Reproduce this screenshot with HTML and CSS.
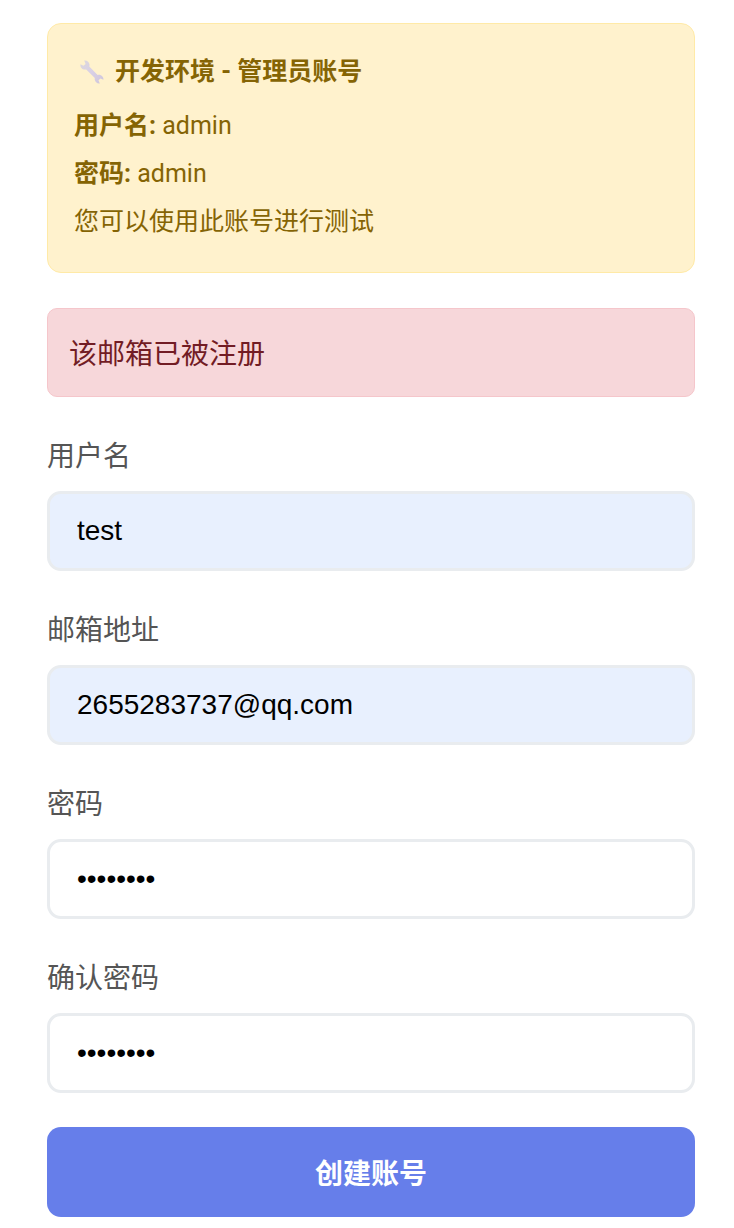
FILE: index.html
```html
<!DOCTYPE html>
<html lang="zh-CN">
<head>
<meta charset="utf-8">
<meta name="viewport" content="width=device-width, initial-scale=1">
<title>创建账号</title>
<link rel="stylesheet" href="styles.css">
</head>
<body>
<main class="page">
  <section class="notice">
    <h2 class="notice-title">
      <svg class="notice-icon" viewBox="0 0 24 24" aria-hidden="true">
        <defs>
          <linearGradient id="steel" x1="0" y1="0" x2="1" y2="1">
            <stop offset="0" stop-color="#dcd8dc"/>
            <stop offset="0.5" stop-color="#d9d0e6"/>
            <stop offset="1" stop-color="#cfc6da"/>
          </linearGradient>
        </defs>
        <path fill="url(#steel)" d="M4.200 .5C6.800 0 9.300 1.900 9.500 4.500c0 .8 0 1.300-.2 1.900l8.300 8.500c1.800-.5 3.700.1 4.800 1.500.8 1 1.200 2.200 1 3.300l-2.900-1.300-2 1.900 1.300 3.200c-2.400.4-4.900-1.300-5.100-3.900 0-.7 0-1.200.1-1.700L6.200 9.500C4.300 9.900 2.200 9.200 1.200 7.700.5 6.700.2 5.500.5 4.200l3 1.600 2.100-1.900z"/>
      </svg>
      <span>开发环境 - 管理员账号</span>
    </h2>
    <p class="notice-line"><strong>用户名:</strong> admin</p>
    <p class="notice-line"><strong>密码:</strong> admin</p>
    <p class="notice-line">您可以使用此账号进行测试</p>
  </section>

  <div class="alert" role="alert">该邮箱已被注册</div>

  <form class="form">
    <div class="field">
      <label class="label" for="username">用户名</label>
      <input class="input input-filled" id="username" type="text" value="test">
    </div>
    <div class="field">
      <label class="label" for="email">邮箱地址</label>
      <input class="input input-filled" id="email" type="email" value="2655283737@qq.com">
    </div>
    <div class="field">
      <label class="label" for="password">密码</label>
      <input class="input" id="password" type="password" value="password">
    </div>
    <div class="field">
      <label class="label" for="confirm">确认密码</label>
      <input class="input" id="confirm" type="password" value="password">
    </div>
    <button class="submit" type="button">创建账号</button>
  </form>
</main>
</body>
</html>
```
FILE: styles.css
```css
* {
  box-sizing: border-box;
}

body {
  margin: 0;
  background: #fff;
  font-family: Roboto, "Noto Sans CJK SC", sans-serif;
}

.page {
  padding: 23px 39px 11px 47px;
}

.notice {
  display: flex;
  flex-direction: column;
  gap: 8px;
  padding: 28px 26px 30px;
  border: 1px solid #ffeaa7;
  border-radius: 14px;
  background: #fff2cd;
  color: #856404;
  font-size: 25px;
  line-height: 40px;
}

.notice-title {
  display: flex;
  align-items: center;
  gap: 11px;
  margin: 0 0 6px;
  padding-left: 6px;
  font-size: 25px;
  font-weight: 700;
}

.notice-icon {
  width: 24px;
  height: 24px;
}

.notice-line {
  margin: 0;
}

.alert {
  margin-top: 35px;
  padding: 25px 21px 20px;
  border: 1px solid #f5c6cb;
  border-radius: 10px;
  background: #f7d7da;
  color: #721c24;
  font-size: 28px;
  line-height: 42px;
}

.form {
  display: flex;
  flex-direction: column;
  margin-top: 39px;
}

.field {
  display: flex;
  flex-direction: column;
  gap: 13px;
  margin-bottom: 39px;
}

.field:last-of-type {
  margin-bottom: 34px;
}

.label {
  color: #555;
  font-size: 28px;
  line-height: 42px;
}

.input {
  width: 100%;
  height: 80px;
  padding: 0 27px 1px;
  border: 3px solid #e9ecef;
  border-radius: 14px;
  background: #fff;
  color: #000;
  font-family: "Liberation Sans", Arial, sans-serif;
  font-size: 28px;
}

.input-filled {
  background: #e8f0fe;
}

.submit {
  padding: 27px 24px 21px;
  border: 0;
  border-radius: 14px;
  background: #667eea;
  color: #fff;
  font-family: inherit;
  font-size: 28px;
  font-weight: 700;
  line-height: 42px;
  cursor: pointer;
}
```
